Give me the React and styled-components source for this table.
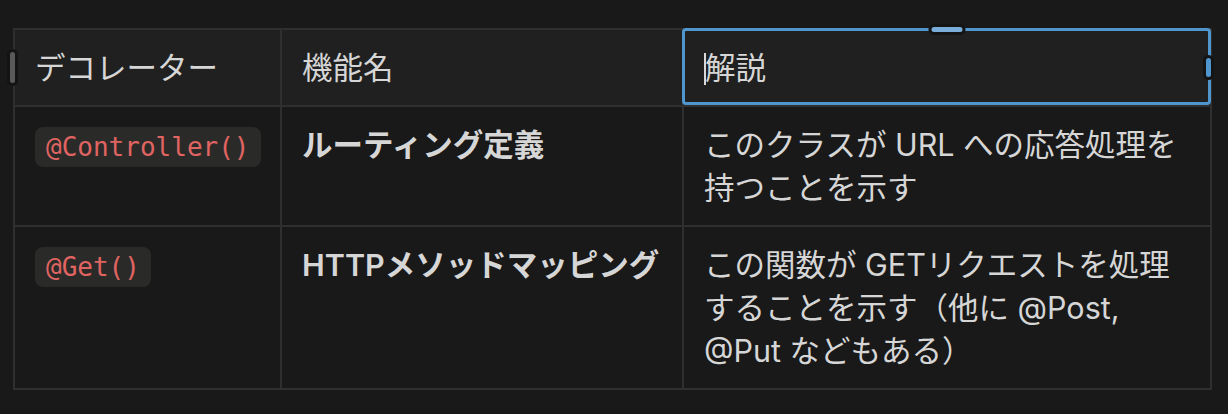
import React from 'react';
import styled, { createGlobalStyle } from 'styled-components';

const GlobalStyle = createGlobalStyle`
  html, body {
    margin: 0;
    padding: 0;
    background: #191919;
  }
  body {
    font-family: Inter, "Noto Sans CJK JP", sans-serif;
    color: #d4d4d4;
  }
`;

const Page = styled.div`
  width: 1228px;
  height: 414px;
  box-sizing: border-box;
  padding: 28px 0 0 13px;
  background: #191919;
  overflow: hidden;
`;

const Table = styled.div`
  display: grid;
  grid-template-columns: 267px 402px 528px;
  width: max-content;
  border-top: 2px solid #2f2f2f;
  border-left: 2px solid #2f2f2f;
`;

const Cell = styled.div`
  box-sizing: border-box;
  position: relative;
  padding: 16px 16px 16px 20px;
  border-right: 2px solid #2f2f2f;
  border-bottom: 2px solid #2f2f2f;
  background: ${(p) => (p.$head ? '#202020' : '#191919')};
  font-size: 30.5px;
  line-height: 43px;
  font-weight: ${(p) => (p.$bold ? 600 : 400)};
  color: #d6d6d6;
  word-break: normal;
  line-break: strict;
`;

const Code = styled.code`
  font-family: "DejaVu Sans Mono", "Liberation Mono", monospace;
  font-size: 26px;
  color: #e06461;
  background: #2a2a29;
  border-radius: 8px;
  padding: 5px 11px;
`;

const Caret = styled.span`
  display: inline-block;
  width: 2px;
  height: 32px;
  margin-right: -1px;
  background: #d8d8d8;
  vertical-align: -6px;
`;

const Selection = styled.div`
  position: absolute;
  top: -2px;
  left: -2px;
  right: -1px;
  bottom: 0;
  border: 3px solid #4f96cf;
  border-radius: 4px;
  pointer-events: none;
`;

const Handle = styled.div`
  position: absolute;
  border-radius: 4px;
  box-shadow: 0 0 0 3px #141414;
  background: ${(p) => p.$color};
`;

const TopHandle = styled(Handle)`
  top: -3px;
  left: 50%;
  width: 31px;
  height: 5px;
  transform: translateX(-50%);
`;

const RightHandle = styled(Handle)`
  top: 28px;
  right: -1px;
  width: 5px;
  height: 19px;
`;

const RowHandle = styled(Handle)`
  top: 22px;
  left: -5px;
  width: 5px;
  height: 31px;
`;

const rows = [
  {
    code: '@Controller()',
    name: 'ルーティング定義',
    desc: 'このクラスが URL への応答処理を持つことを示す',
  },
  {
    code: '@Get()',
    name: 'HTTPメソッドマッピング',
    desc: 'この関数が GETリクエストを処理することを示す（他に @Post, @Put などもある）',
  },
];

export default function App() {
  return (
    <>
      <GlobalStyle />
      <Page>
        <Table>
          <Cell $head>
            <RowHandle $color="#5a5a5a" />
            デコレーター
          </Cell>
          <Cell $head>機能名</Cell>
          <Cell $head>
            <Caret />
            解説
            <Selection />
            <TopHandle $color="#79aedb" />
            <RightHandle $color="#4f96cf" />
          </Cell>
          {rows.map((r) => (
            <React.Fragment key={r.code}>
              <Cell>
                <Code>{r.code}</Code>
              </Cell>
              <Cell $bold>{r.name}</Cell>
              <Cell>{r.desc}</Cell>
            </React.Fragment>
          ))}
        </Table>
      </Page>
    </>
  );
}
